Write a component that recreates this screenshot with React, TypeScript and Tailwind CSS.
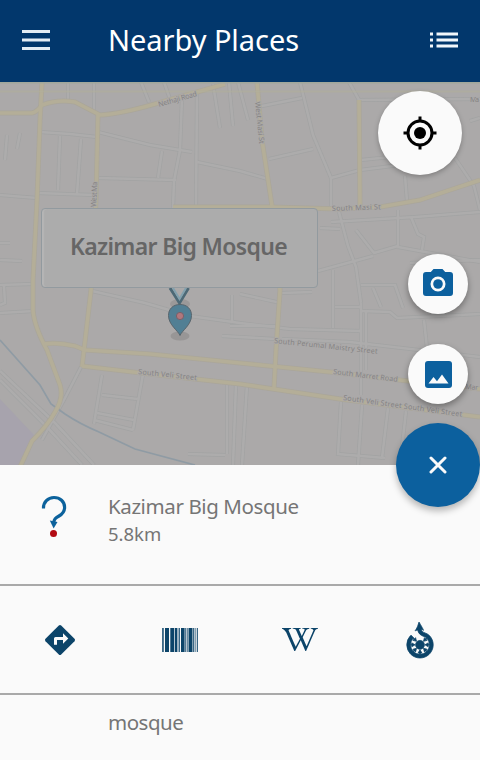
import React from "react";
import { FaWikipediaW } from "react-icons/fa6";
import { SiWikimediacommons } from "react-icons/si";

const minorRoads = [
  "M68 82V102", "M94 82V112", "M40 132L70 134L97 137", "M60 136L58 190", "M81 139L77 194",
  "M0 195L37 198", "M38 193L94 195", "M98 132L150 145L192 152", "M197 162L240 171L268 179",
  "M182 98L180 150L174 181L173 208", "M197 90L196 208", "M98 178L176 180", "M162 151L158 178",
  "M141 82L149 102", "M164 82L171 102", "M213 84L220 128", "M229 82L233 126", "M238 82L248 120",
  "M257 107L302 98", "M300 82L313 135L331 178V206", "M269 159L313 149", "M331 178L360 170L408 164",
  "M349 82L359 100L480 99", "M361 160L400 156", "M405 176L407 201", "M455 158L474 186L480 210",
  "M470 121L480 118", "M331 222L415 217L480 212", "M339 212L348 246L356 267L361 303",
  "M398 210V248", "M411 217L418 234L424 237L422 250", "M356 230L374 253L398 246", "M318 271L373 256",
  "M398 247L480 262", "M410 263L480 260", "M320 228L340 229", "M333 270V328", "M361 303V395",
  "M335 307H361", "M361 285H395L403 308", "M361 311L390 312L397 318L480 314", "M373 288L381 307",
  "M92 291L145 303L190 316L240 323L290 329L361 331", "M282 293L312 292", "M240 294L281 303",
  "M232 295V321", "M222 336L275 339", "M230 326L280 326", "M282 339L350 342L480 357",
  "M424 320L427 348", "M366 312V370", "M0 285L32 284", "M0 313L34 311", "M4 286L5 303L0 305",
  "M81 367L65 398L42 440", "M102 375L94 424", "M143 374L133 430", "M102 395L138 399", "M97 413L134 420",
  "M94 420L133 430", "M0 371L55 423L94 465", "M0 380L46 426L82 465", "M227 383V454", "M236 384L233 465",
  "M247 385L242 465", "M341 402L338 454L385 458",
  "M362 405L358 465", "M388 408L382 458", "M406 411L400 465", "M188 454L225 455",
  "M0 243L10 243", "M0 260L22 261", "M7 135L5 160", "M20 133L17 149",
];

const mainRoads = [
  "M42 82L40 120L37 200L33 280V310Q34 326 47 350L60 385Q64 398 55 412Q48 425 32 441L20 467",
  "M0 113L32 113Q37 112 42 105Q58 99 75 102L100 115Q120 114 155 104L225 84",
  "M98 113L96 200L91 290L82 367",
  "M44 344Q58 342 75 346L85 350L150 354L240 363L330 372L408 381L480 389",
  "M82 366L150 374L240 384L340 399L480 417",
  "M257 82L262 140L272 206L280 290L276 350L274 388",
  "M173 207H270L340 209L380 207L420 200L450 190L480 180",
  "M359 100L360 207",
];

function CityMap() {
  return (
    <svg className="block h-full w-full" viewBox="0 82 480 383" fill="none">
      <rect y="82" width="480" height="383" fill="#aba9a9" />
      <path d="M0 399L34 435L18 465H0Z" fill="#a7a3ad" />
      <g stroke="#a2a3a3" strokeWidth="4">
        {minorRoads.map((d) => <path key={d} d={d} />)}
      </g>
      <g stroke="#adacac" strokeWidth="2.6">
        {minorRoads.map((d) => <path key={d} d={d} />)}
      </g>
      <path d="M0 340L40 385L51 404L65 414Q80 424 99 432L135 449L195 465" stroke="#8f9ba4" strokeWidth="1.7" />
      <g stroke="#aaa69a" strokeWidth="5" strokeLinejoin="round">
        {mainRoads.map((d) => <path key={d} d={d} />)}
      </g>
      <g stroke="#b4ae98" strokeWidth="3.6" strokeLinejoin="round">
        {mainRoads.map((d) => <path key={d} d={d} />)}
      </g>
      <path d="M0 91.5H480" stroke="#b0af9b" strokeWidth="2" opacity=".6" />
      <path d="M0 82.7H480" stroke="#a0a79c" strokeWidth="1.5" />
      <g fill="#858383" stroke="#aba9a9" strokeWidth="1.5" paintOrder="stroke" fontFamily="Noto Sans, sans-serif" fontSize="7.3">
        <text transform="translate(159 107) rotate(-16)" textLength="40">Nethaji Road</text>
        <text transform="translate(255 102) rotate(84)" textLength="42">West Masi St</text>
        <text transform="translate(96 207) rotate(-87)" textLength="25">West Ma</text>
        <text transform="translate(332 211) rotate(-2)" textLength="49">South Masi St</text>
        <text transform="translate(274 343) rotate(6)" textLength="104">South Perumal Maistry Street</text>
        <text transform="translate(138 374) rotate(6)" textLength="59">South Veli Street</text>
        <text transform="translate(333 374) rotate(7)" textLength="65">South Marret Road</text>
        <text transform="translate(343 400) rotate(8)" textLength="120">South Veli Street South Veli Street</text>
        <text transform="translate(465 389) rotate(4)" textLength="13">Mar</text>
        <text transform="translate(470 102)" textLength="9">Ma</text>
      </g>
      <ellipse cx="180" cy="304" rx="10" ry="5" fill="#9b9999" />
      <path d="M170 288L179.500 303L188.500 288" stroke="#4d6976" strokeWidth="3" />
      <path d="M173 288L179.500 299L186 288" stroke="#82a1ae" strokeWidth="2" />
      <ellipse cx="180" cy="336" rx="9.500" ry="4.500" fill="#989696" />
      <path d="M180 335.500C178.500 331 168.500 325 168.500 315.500C168.500 309 173 304.500 180 304.500S191.500 309 191.500 315.500C191.500 325 181.500 331 180 335.500Z" fill="#517f94" stroke="#58656d" />
      <circle cx="180" cy="316" r="3.600" fill="#b1777d" stroke="#795f69" />
    </svg>
  );
}

function QuestionIcon() {
  return (
    <svg width="28" height="44" viewBox="0 0 28 44" fill="none">
      <path d="M3.500 15.500C3.200 9 8 4.500 14 4.500C20 4.500 24.600 8.500 24.600 14.300C24.600 18.800 22.500 21 19 23C15.500 25 14 26 13.700 30" stroke="#0c629c" strokeWidth="3.200" />
      <path d="M9.800 27.500L17.500 29L13.600 35.500Z" fill="#0c629c" />
      <circle cx="13.500" cy="40.400" r="3.500" fill="#b20a12" />
    </svg>
  );
}

const barcodeBars: [number, number][] = [
  [0, 0.8], [1.3, 0.7], [3, 4], [8.3, 4], [13, 2], [15.6, 0.8], [17, 0.8],
  [19, 3.6], [23.3, 0.8], [24.8, 0.8], [26.5, 4], [31.2, 0.8], [32.7, 0.8], [34.8, 1],
];

function BarcodeIcon() {
  return (
    <svg width="36" height="24" viewBox="0 0 36 24">
      {barcodeBars.map(([x, w]) => <rect key={x} x={x} width={w} height="24" fill="#0c4469" />)}
    </svg>
  );
}

export default function App() {
  return (
    <div className="flex h-[760px] w-[480px] flex-col overflow-hidden bg-[#fafafa] font-['Noto_Sans',sans-serif] text-[#757575]">
      <header className="flex h-[82px] shrink-0 items-center bg-[#02376c] pl-[22px] pr-[22px] text-white">
        <svg className="-mt-[3px] shrink-0" width="28" height="20" viewBox="0 0 28 20">
          <path d="M0 1.500H28M0 10H28M0 18.500H28" stroke="#e4edf5" strokeWidth="3" />
        </svg>
        <h1 className="-mt-[3px] ml-[58px] grow whitespace-nowrap text-[29px] leading-none tracking-[-0.05px]">Nearby Places</h1>
        <svg className="-mt-0.5" width="28" height="16" viewBox="0 0 28 16">
          <path d="M6.500 2H28M6.500 8H28M6.500 14H28M0 2H3M0 8H3M0 14H3" stroke="#f2f7fb" strokeWidth="3" />
        </svg>
      </header>

      <section className="relative h-[383px] shrink-0">
        <CityMap />
        <div className="absolute left-[41px] top-[126px] flex h-20 w-[277px] items-center justify-center rounded-[4px] border border-[#929a9f] bg-[#acacac] pb-1 pr-[2px] shadow-[inset_2px_0_1px_#b5b5b5]">
          <span className="whitespace-nowrap text-[23px] font-semibold leading-none tracking-[-0.66px] text-[#666666]">Kazimar Big Mosque</span>
        </div>
        <button className="absolute left-[378px] top-[9px] flex size-[84px] items-center justify-center rounded-full bg-[#fafafa] shadow-[0_2px_5px_rgba(0,0,0,0.25)]">
          <svg width="34" height="34" viewBox="0 0 34 34" fill="none" stroke="#000" strokeWidth="3">
            <circle cx="17" cy="17" r="12" />
            <path d="M17 .5V6M17 28V33.500M.5 17H6M28 17H33.500" />
            <circle cx="17" cy="17" r="6" fill="#000" stroke="none" />
          </svg>
        </button>
        <button className="absolute left-[408px] top-[172px] flex size-[60px] items-center justify-center rounded-full bg-[#fafafa] shadow-[0_3px_6px_rgba(0,0,0,0.35)]">
          <svg className="-mt-[3px]" width="30" height="27" viewBox="0 0 30 27">
            <path fillRule="evenodd" d="M10.500 0H19.500L22.200 3H27Q30 3 30 6V24Q30 27 27 27H3Q0 27 0 24V6Q0 3 3 3H7.800ZM15 7.500A7.500 7.500 0 1 0 15 22.500A7.500 7.500 0 1 0 15 7.500Z" fill="#0c609e" />
            <circle cx="15" cy="15" r="4.800" fill="#0c609e" />
          </svg>
        </button>
        <button className="absolute left-[408px] top-[262px] flex size-[60px] items-center justify-center rounded-full bg-[#fafafa] shadow-[0_3px_6px_rgba(0,0,0,0.35)]">
          <svg width="27" height="27" viewBox="0 0 27 27">
            <rect width="27" height="27" rx="3" fill="#0c609e" />
            <path d="M3.500 22.500L8.500 16L12 20.300L17 13.500L23.500 22.500Z" fill="#fafafa" />
          </svg>
        </button>
        <button className="absolute left-[396px] top-[341px] z-10 flex size-[84px] items-center justify-center rounded-full bg-[#0c609e] shadow-[0_4px_7px_rgba(0,0,0,0.28)]">
          <svg width="18" height="18" viewBox="0 0 18 18">
            <path d="M2 2L16 16M16 2L2 16" stroke="#fafafa" strokeWidth="3" strokeLinecap="round" />
          </svg>
        </button>
      </section>

      <section className="flex h-[121px] shrink-0 border-b-2 border-[#a9a9a9] pl-10 pt-7">
        <QuestionIcon />
        <div className="ml-10 whitespace-nowrap">
          <p className="text-[20.5px] leading-[27px] tracking-[-0.4px]">Kazimar Big Mosque</p>
          <p className="text-[18.5px] leading-[27px]">5.8km</p>
        </div>
      </section>

      <nav className="grid h-[109px] shrink-0 grid-cols-4 place-items-center border-b-2 border-[#a9a9a9] text-[#0c4469]">
        <svg width="30" height="30" viewBox="0 0 30 30">
          <path d="M13.800 .5Q15 -.5 16.200 .5L29.500 13.800Q30.500 15 29.500 16.200L16.200 29.500Q15 30.500 13.800 29.500L.5 16.200Q-.5 15 .5 13.800Z" fill="#0c4469" />
          <path d="M9 19.700V13.500Q9 12 10.500 12H18V8.200L23.300 13.500L18 18.800V15H12V19.700Z" fill="#fafafa" />
        </svg>
        <BarcodeIcon />
        <FaWikipediaW className="h-[29px] w-9" />
        <SiWikimediacommons className="size-9 overflow-visible stroke-current [stroke-width:0.5px]" />
      </nav>

      <p className="pl-[108px] pt-[14px] text-[20.5px] leading-[27px] tracking-[-0.5px]">mosque</p>
    </div>
  );
}
